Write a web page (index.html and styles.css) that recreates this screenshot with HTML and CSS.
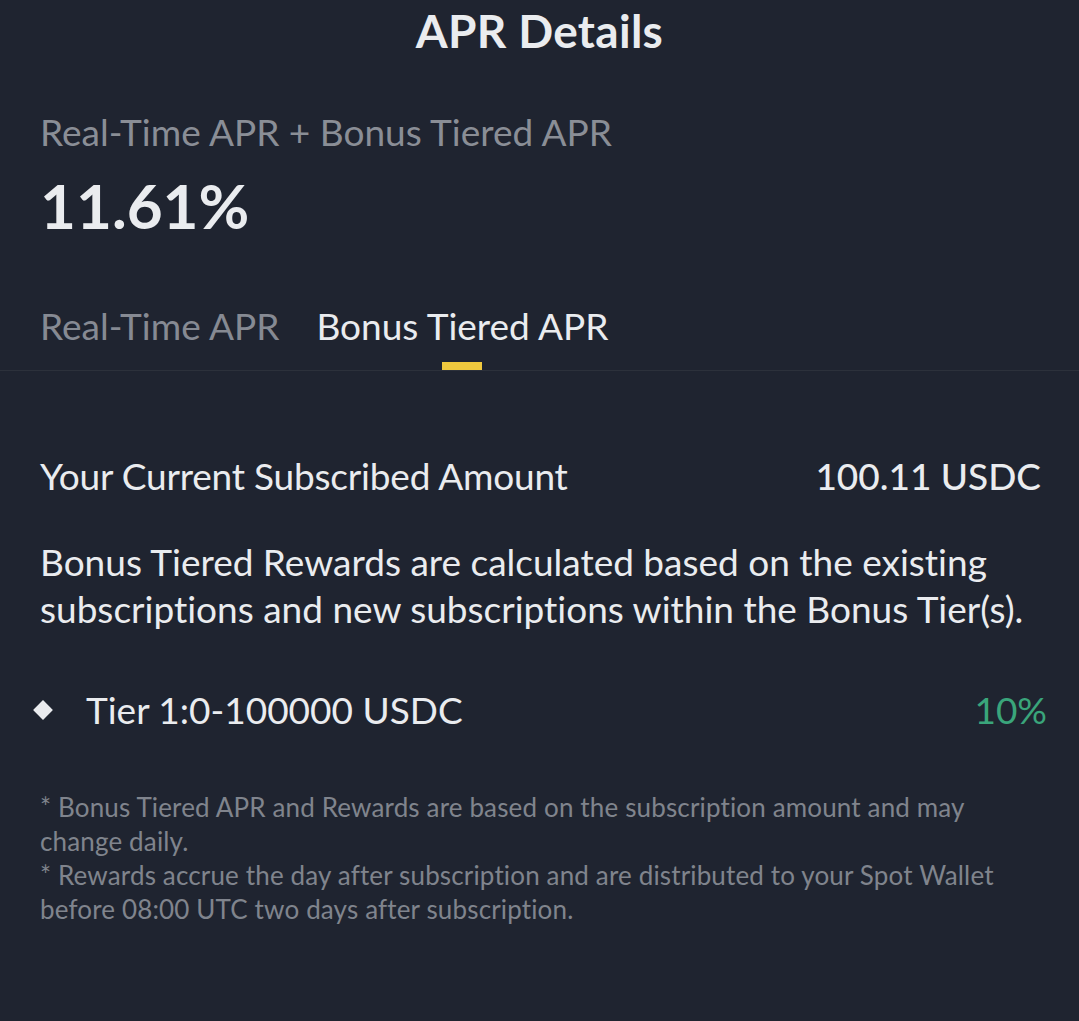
FILE: index.html
```html
<!DOCTYPE html>
<html lang="en">
<head>
<meta charset="utf-8">
<title>APR Details</title>
<link rel="stylesheet" href="styles.css">
</head>
<body>
<div class="page">
  <h1 class="title">APR Details</h1>
  <section class="summary">
    <div class="summary-label">Real-Time APR + Bonus Tiered APR</div>
    <div class="summary-value">11.61%</div>
  </section>
  <nav class="tabs">
    <div class="tab">Real-Time APR</div>
    <div class="tab tab-active">Bonus Tiered APR</div>
  </nav>
  <section class="content">
    <div class="amount-row">
      <span class="amount-label">Your Current Subscribed Amount</span>
      <span class="amount-value">100.11 USDC</span>
    </div>
    <p class="desc">Bonus Tiered Rewards are calculated based on the existing subscriptions and new subscriptions within the Bonus Tier(s).</p>
    <div class="tier-row">
      <span class="tier-dot"></span>
      <span class="tier-label">Tier 1:0-100000 USDC</span>
      <span class="tier-value">10%</span>
    </div>
    <div class="notes">
      <p>* Bonus Tiered APR and Rewards are based on the subscription amount and may change daily.</p>
      <p>* Rewards accrue the day after subscription and are distributed to your Spot Wallet before 08:00 UTC two days after subscription.</p>
    </div>
  </section>
</div>
</body>
</html>
```
FILE: styles.css
```css
html, body {
  margin: 0;
  padding: 0;
  background: #1f2430;
}
body {
  font-family: "Lato", "Open Sans", sans-serif;
  font-variant-ligatures: none;
  color: #eaecef;
  width: 1079px;
  height: 1021px;
  overflow: hidden;
}
.page {
  display: flex;
  flex-direction: column;
  padding-top: 3px;
}
.title {
  margin: 0;
  text-align: center;
  font-size: 46px;
  font-weight: 700;
  line-height: 56px;
  letter-spacing: 0.3px;
  color: #eaecef;
}
.summary {
  padding: 51px 40px 0;
}
.summary-label {
  font-size: 37px;
  line-height: 44px;
  color: #8a8e96;
}
.summary-value {
  margin-top: 16px;
  font-size: 62px;
  font-weight: 700;
  line-height: 70px;
}
.tabs {
  margin-top: 64px;
  display: flex;
  gap: 37px;
  padding: 0 40px;
  border-bottom: 1px solid #2c313b;
}
.tab {
  position: relative;
  font-size: 37px;
  line-height: 44px;
  padding-bottom: 22px;
  color: #868a93;
}
.tab-active {
  color: #eaecef;
}
.tab-active::after {
  content: "";
  position: absolute;
  left: 50%;
  bottom: 0;
  width: 40px;
  height: 8px;
  margin-left: -20px;
  background: #f0c93e;
}
.content {
  padding: 83px 38px 0 40px;
}
.amount-row {
  display: flex;
  justify-content: space-between;
  align-items: center;
  font-size: 37px;
  line-height: 44px;
}
.amount-label {
  letter-spacing: -0.2px;
}
.amount-value {
  font-weight: 500;
}
.desc {
  margin: 40px 0 0;
  font-size: 37px;
  line-height: 47px;
}
.tier-row {
  margin-top: 56px;
  margin-left: -7px;
  margin-right: -6px;
  display: flex;
  align-items: center;
  font-size: 37px;
  line-height: 44px;
}
.tier-dot {
  width: 14px;
  height: 14px;
  background: #eaecef;
  transform: rotate(45deg);
  margin: 0 36px 0 3px;
}
.tier-label {
  flex: 1;
}
.tier-value {
  color: #3aa57b;
}
.notes {
  margin-top: 58px;
  font-size: 26px;
  line-height: 34px;
  letter-spacing: 0.15px;
  color: #80848d;
}
.notes p {
  margin: 0;
}
```
